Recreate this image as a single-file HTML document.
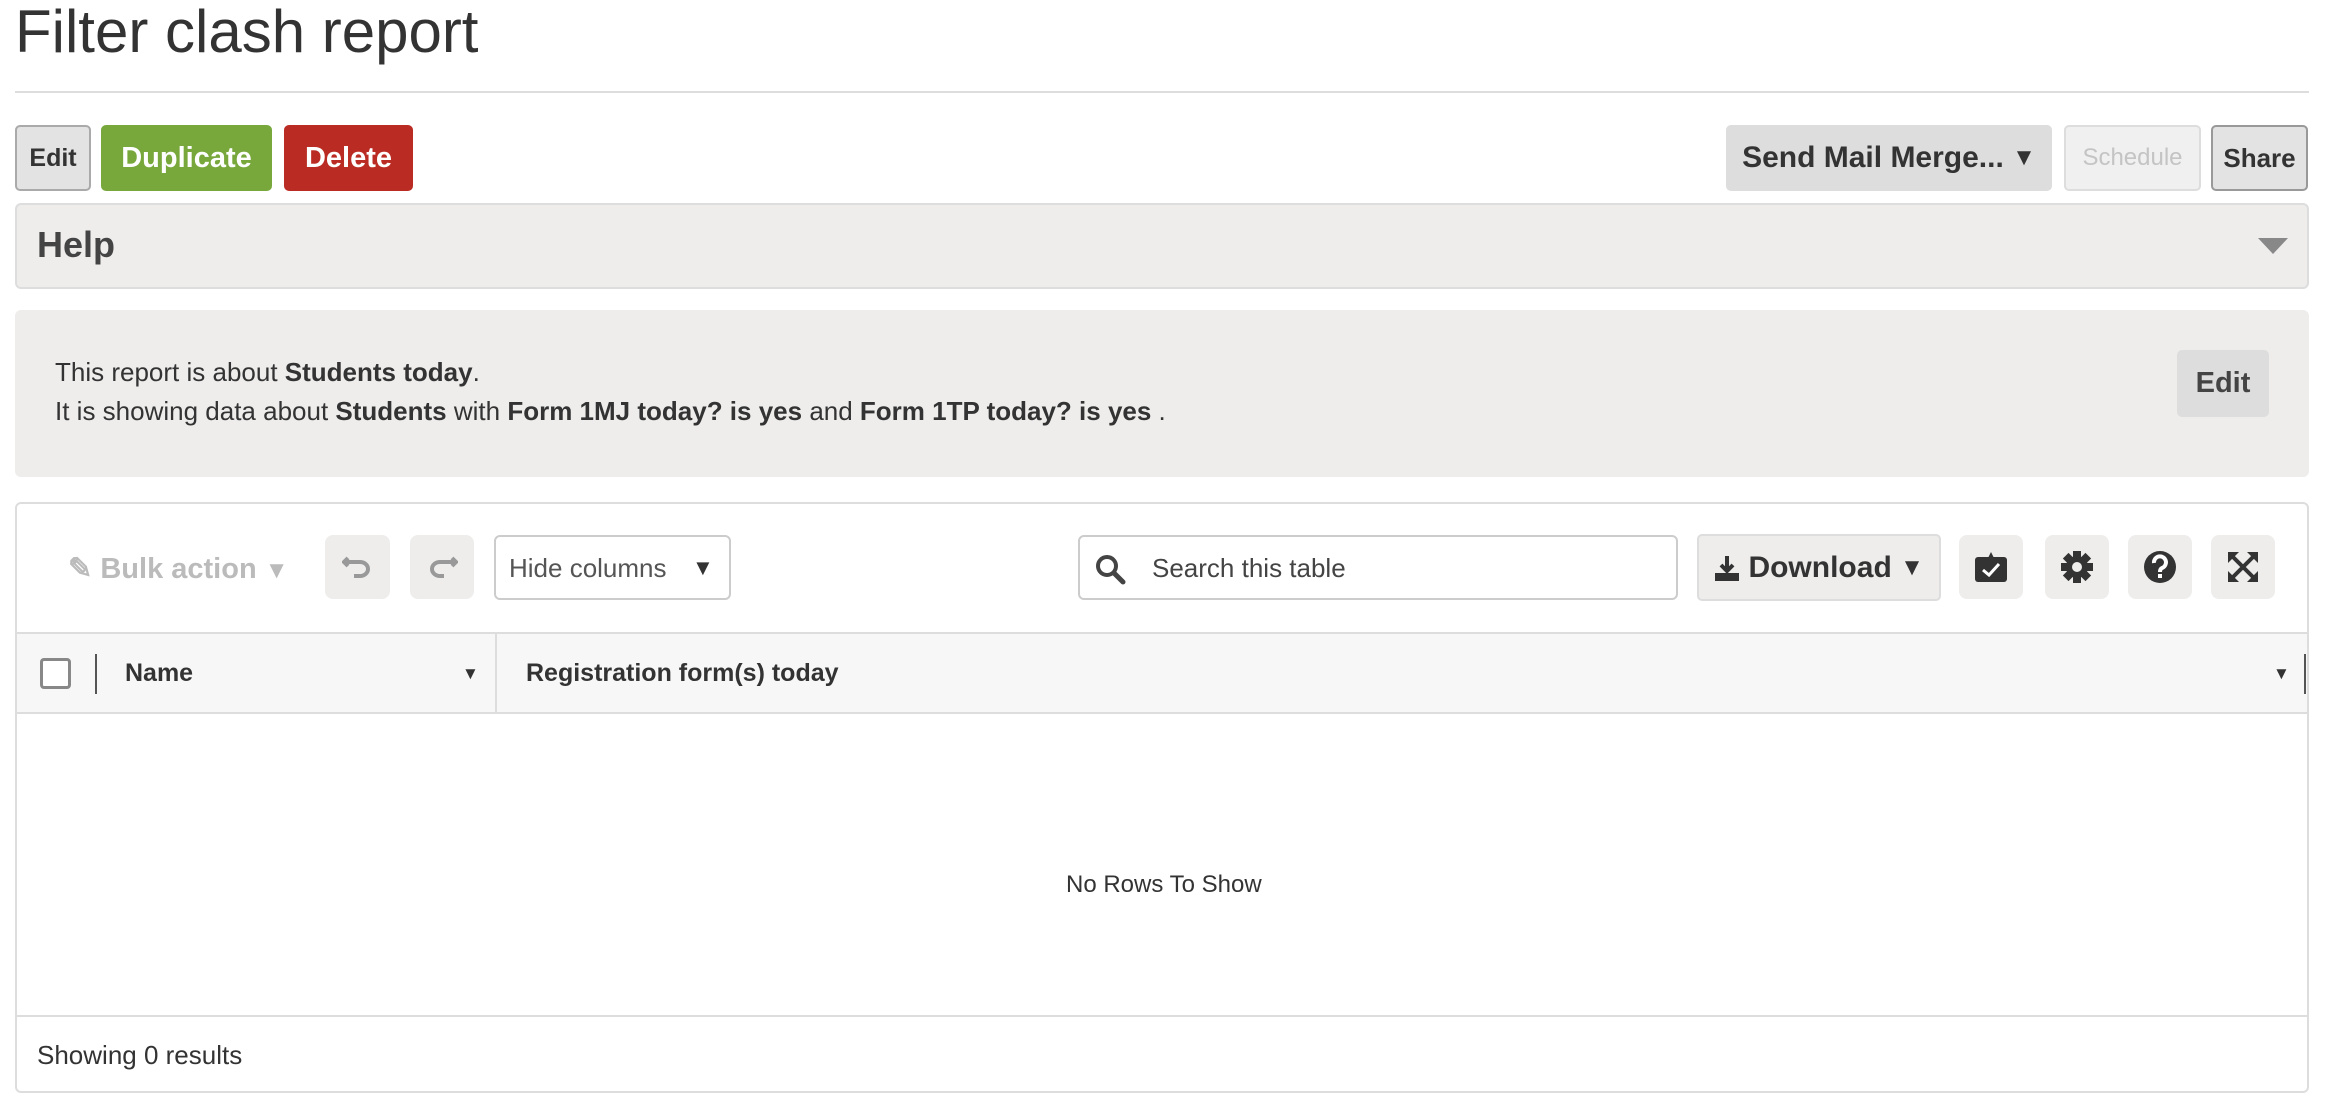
<!DOCTYPE html>
<html><head><meta charset="utf-8"><style>
*{box-sizing:border-box;margin:0;padding:0}
body{width:2328px;height:1100px;background:#fff;font-family:"Liberation Sans",sans-serif;color:#333;position:relative;overflow:hidden}
.a{position:absolute}
.btn{position:absolute;display:flex;align-items:center;justify-content:center;border-radius:5px;font-weight:bold;font-size:29px}
.ib{position:absolute;top:535px;width:64px;height:64px;background:#eeedec;border-radius:8px;display:flex;align-items:center;justify-content:center}
</style></head><body>
<div class="a" style="left:15px;top:-3px;font-size:60px;color:#333">Filter clash report</div>
<div class="a" style="left:15px;top:91px;width:2294px;height:2px;background:#ddd"></div>

<div class="btn" style="left:15px;top:125px;width:76px;height:66px;background:#e3e3e3;border:2px solid #aaa;font-size:25px;color:#333">Edit</div>
<div class="btn" style="left:101px;top:125px;width:171px;height:66px;background:#78a83c;color:#fff">Duplicate</div>
<div class="btn" style="left:284px;top:125px;width:129px;height:66px;background:#ba2b23;color:#fff">Delete</div>

<div class="btn" style="left:1726px;top:125px;width:326px;height:66px;background:#ddd;color:#333;font-size:30px">Send Mail Merge...&nbsp;<span style="font-size:24px">▼</span></div>
<div class="btn" style="left:2064px;top:125px;width:137px;height:66px;background:#f0f0f0;border:2px solid #ddd;color:#c4c4c4;font-size:24px;font-weight:normal">Schedule</div>
<div class="btn" style="left:2211px;top:125px;width:97px;height:66px;background:#e3e3e3;border:2px solid #999;font-size:26px;color:#333">Share</div>

<div class="a" style="left:15px;top:203px;width:2294px;height:86px;background:#eeedec;border:2px solid #ddd;border-radius:6px"></div>
<div class="a" style="left:37px;top:224px;font-size:36px;font-weight:bold;color:#444">Help</div>
<div class="a" style="left:2258px;top:238px;width:0;height:0;border-left:15px solid transparent;border-right:15px solid transparent;border-top:16px solid #888"></div>

<div class="a" style="left:15px;top:310px;width:2294px;height:167px;background:#eeedec;border-radius:6px"></div>
<div class="a" style="left:55px;top:353px;font-size:26px;line-height:39px;color:#333">This report is about <b>Students today</b>.<br>It is showing data about <b>Students</b> with <b>Form 1MJ today? is yes</b> and <b>Form 1TP today? is yes</b> .</div>
<div class="btn" style="left:2177px;top:350px;width:92px;height:67px;background:#ddd;font-size:29px;color:#444">Edit</div>

<div class="a" style="left:15px;top:502px;width:2294px;height:591px;border:2px solid #ddd;border-radius:6px"></div>
<div class="a" style="left:68px;top:551px;font-size:29px;font-weight:bold;color:#bbb">✎ Bulk action <span style="font-size:24px">▼</span></div>
<div class="ib" style="left:325px;width:65px"><svg width="32" height="28" viewBox="0 0 32 28"><path d="M6 5 L2 9 L6 13 M2 9 H18 a8 7 0 0 1 0 14 H12" fill="none" stroke="#999" stroke-width="4"/></svg></div>
<div class="ib" style="left:410px;width:64px"><svg width="32" height="28" viewBox="0 0 32 28"><path d="M26 5 L30 9 L26 13 M30 9 H14 a8 7 0 0 0 0 14 H18" fill="none" stroke="#999" stroke-width="4"/></svg></div>
<div class="a" style="left:494px;top:535px;width:237px;height:65px;border:2px solid #ccc;border-radius:6px;font-size:26px;color:#555;padding:16px 0 0 13px">Hide columns <span style="position:absolute;left:196px;top:18px;font-size:22px;color:#333">▼</span></div>
<div class="a" style="left:1078px;top:535px;width:600px;height:65px;border:2px solid #ccc;border-radius:6px;font-size:26px;color:#444;padding:16px 0 0 72px">Search this table
<svg style="position:absolute;left:14px;top:16px" width="32" height="32" viewBox="0 0 32 32"><circle cx="13" cy="13" r="9" fill="none" stroke="#444" stroke-width="4"/><path d="M20 20 L29 29" stroke="#444" stroke-width="5" stroke-linecap="round"/></svg></div>
<div class="btn" style="left:1697px;top:534px;width:244px;height:67px;background:#eeedec;border:2px solid #ddd;font-size:30px;color:#333"><svg width="26" height="28" viewBox="0 0 26 28"><path d="M13 2 V16 M7 11 L13 17 L19 11" stroke="#333" stroke-width="4" fill="none"/><rect x="1" y="19" width="24" height="8" fill="#333"/></svg>&nbsp;Download&nbsp;<span style="font-size:24px">▼</span></div>
<div class="ib" style="left:1959px"><svg width="34" height="34" viewBox="0 0 34 34"><path d="M17 2 L20 8 H14 Z" fill="#333"/><rect x="1" y="7" width="32" height="25" rx="3" fill="#333"/><path d="M9 20 L15 25 L25 14" stroke="#fff" stroke-width="3" fill="none"/></svg></div>
<div class="ib" style="left:2045px"><svg width="34" height="34" viewBox="0 0 34 34"><g fill="#333"><circle cx="17" cy="17" r="11"/><rect x="13" y="1" width="8" height="32"/><rect x="1" y="13" width="32" height="8"/><rect x="13" y="1" width="8" height="32" transform="rotate(45 17 17)"/><rect x="13" y="1" width="8" height="32" transform="rotate(-45 17 17)"/></g><circle cx="17" cy="17" r="5" fill="#eeedec"/></svg></div>
<div class="ib" style="left:2128px"><svg width="34" height="34" viewBox="0 0 34 34"><circle cx="17" cy="17" r="16" fill="#333"/><path d="M11 13 a6 6 0 1 1 8 5 q-2 1 -2 4" stroke="#fff" stroke-width="4" fill="none"/><rect x="15" y="24" width="4" height="4" fill="#fff"/></svg></div>
<div class="ib" style="left:2211px"><svg width="34" height="34" viewBox="0 0 34 34"><path d="M5 5 L29 29 M29 5 L5 29" stroke="#333" stroke-width="4"/><path d="M2 2 H13 L2 13Z M32 2 H21 L32 13Z M2 32 H13 L2 21Z M32 32 H21 L32 21Z" fill="#333"/></svg></div>

<div class="a" style="left:17px;top:632px;width:2290px;height:82px;background:#f7f7f7;border-top:2px solid #ddd;border-bottom:2px solid #ddd"></div>
<div class="a" style="left:40px;top:658px;width:31px;height:31px;border:3px solid #888;border-radius:4px;background:#fff"></div>
<div class="a" style="left:95px;top:654px;width:2px;height:40px;background:#555"></div>
<div class="a" style="left:125px;top:659px;font-size:25px;font-weight:bold;color:#333">Name</div>
<div class="a" style="left:462px;top:664px;font-size:17px;color:#333">▼</div>
<div class="a" style="left:495px;top:634px;width:2px;height:78px;background:#ddd"></div>
<div class="a" style="left:526px;top:659px;font-size:25px;font-weight:bold;color:#333">Registration form(s) today</div>
<div class="a" style="left:2273px;top:664px;font-size:17px;color:#333">▼</div>
<div class="a" style="left:2304px;top:654px;width:2px;height:40px;background:#555"></div>

<div class="a" style="left:1066px;top:871px;font-size:24px;color:#333">No Rows To Show</div>
<div class="a" style="left:17px;top:1015px;width:2290px;height:2px;background:#ddd"></div>
<div class="a" style="left:37px;top:1040px;font-size:26px;color:#333">Showing 0 results</div>
</body></html>
